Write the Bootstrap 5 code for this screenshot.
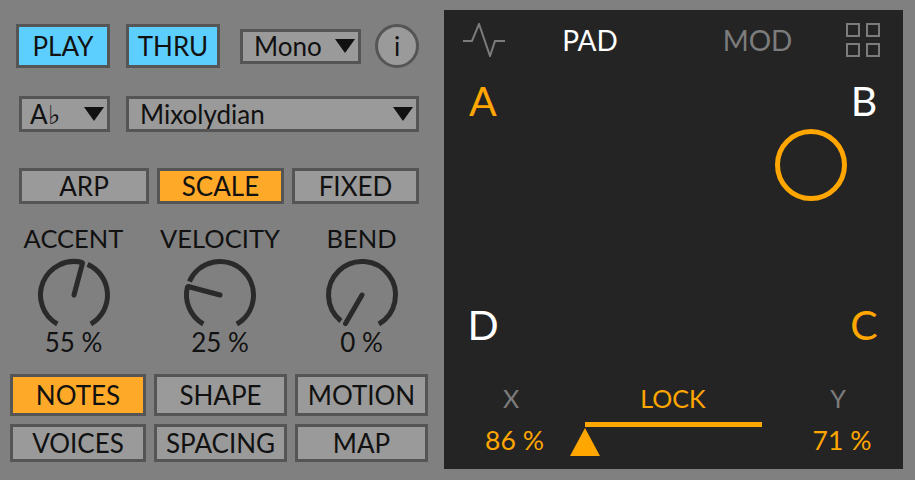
<!DOCTYPE html>
<html lang="en">
<head>
  <meta charset="UTF-8">
  <meta name="viewport" content="width=device-width, initial-scale=1">
  <title>Expressive Chords</title>
  <link href="https://cdn.jsdelivr.net/npm/bootstrap@5.3.3/dist/css/bootstrap.min.css" rel="stylesheet">
  <style>
    body { background: #808080; font-family: Lato, "Liberation Sans", sans-serif; color: #111; overflow: hidden; width: 915px; height: 480px; }
    .left-side { width: 444px; height: 480px; flex: none; }
    .dev-btn { border: 3px solid #555; border-radius: 0; background: #9a9a9a; color: #111; font-size: 26px; line-height: 1; padding: 0; display: flex; align-items: center; justify-content: center; }
    .dev-btn:hover { background: #9a9a9a; color: #111; border-color: #555; }
    .on-blue, .on-blue:hover { background: #5ccfff; }
    .on-orange, .on-orange:hover { background: #ffa928; }
    .dev-select { justify-content: space-between; padding: 0 3px 0 11px; }
    .dev-select.dropdown-toggle::after { border: 0; margin: 0; width: 0; height: 0; border-left: 10px solid transparent; border-right: 10px solid transparent; border-top: 14px solid #111; }
    .round-info { width: 44px; height: 44px; border-radius: 50%; font-size: 26px; margin-left: 14px; margin-top: -1px; }

    .row-top { height: 44px; margin: 24px 0 0 16px; gap: 16px; }
    .row-key { height: 36px; margin: 28px 0 0 19px; gap: 16px; }
    .row-mode { height: 36px; margin: 36px 0 0 19px; gap: 8px; }
    .row-knobs { margin: 19px 0 0 0; }
    .knob-cell { text-align: center; flex: none; }
    .knob-name { font-size: 25.5px; line-height: 30px; }
    .knob-val { font-size: 26px; line-height: 30px; margin-top: -8px; }
    .knob-svg { display: block; margin: 2px auto 0; }
    .row-tabs { margin: 0 0 0 10px; gap: 8px; }
    .row-first { margin-top: 17px; }

    .pad-panel { width: 459px; height: 459px; margin-top: 10px; background: #242424; position: relative; flex: none; }
    .pad-head { height: 47px; margin-top: 6px; padding-left: 19px; font-size: 28px; }
    .corner { font-size: 41px; line-height: 40px; width: 50px; text-align: center; }
    .corner-row { padding: 0 14px; }
    .txt-white { color: #fff; }
    .txt-gray { color: #7c7c7c; }
    .txt-orange { color: #ffa600; }
    .pad-dot { position: absolute; left: 331px; top: 119px; width: 72px; height: 72px; border: 5px solid #ffa600; border-radius: 50%; }
    .pad-foot { font-size: 25px; line-height: 30px; text-align: center; }
    .foot-val { font-size: 26.5px; margin-top: 12px; }
    .lock-bar { height: 5px; width: 177px; background: #ffa600; }
    .lock-arrow { width: 0; height: 0; border-left: 15px solid transparent; border-right: 15px solid transparent; border-bottom: 28px solid #ffa600; margin: 1px 0 0 -15px; }
  </style>
</head>
<body>

<div class="d-flex">
  <div class="left-side">
    <div class="d-flex row-top">
      <button class="btn dev-btn on-blue" style="width:94px">PLAY</button>
      <button class="btn dev-btn on-blue" style="width:94px">THRU</button>
      <div class="d-flex align-items-center ms-1">
        <button class="btn dev-btn dev-select dropdown-toggle" style="width:121px;height:35px">Mono</button>
        <button class="btn dev-btn round-info">i</button>
      </div>
    </div>

    <div class="d-flex row-key">
      <button class="btn dev-btn dev-select dropdown-toggle" style="width:91px;padding-left:8px">A♭</button>
      <button class="btn dev-btn dev-select dropdown-toggle" style="width:293px">Mixolydian</button>
    </div>

    <div class="d-flex row-mode">
      <button class="btn dev-btn" style="width:130px">ARP</button>
      <button class="btn dev-btn on-orange" style="width:127px">SCALE</button>
      <button class="btn dev-btn" style="width:127px">FIXED</button>
    </div>

    <div class="d-flex row-knobs" id="knobs"></div>

    <div class="d-flex row-tabs row-first">
      <button class="btn dev-btn on-orange" style="width:136px;height:42px">NOTES</button>
      <button class="btn dev-btn" style="width:133px;height:42px">SHAPE</button>
      <button class="btn dev-btn" style="width:133px;height:42px">MOTION</button>
    </div>
    <div class="d-flex row-tabs mt-2">
      <button class="btn dev-btn" style="width:136px;height:38px">VOICES</button>
      <button class="btn dev-btn" style="width:133px;height:38px">SPACING</button>
      <button class="btn dev-btn" style="width:133px;height:38px">MAP</button>
    </div>
  </div>

  <div class="pad-panel">
    <div class="d-flex align-items-center pad-head">
      <svg width="42" height="34" viewBox="0 0 42 34" style="flex:none" fill="none" stroke="#7c7c7c" stroke-width="2">
        <path d="M0 18H9L16 1L27 33L32 18H42"/>
      </svg>
      <div class="txt-white text-center" style="width:170px">PAD</div>
      <div class="txt-gray text-center" style="width:165px">MOD</div>
      <svg style="flex:none;margin-left:6px" width="34" height="34" viewBox="0 0 34 34" fill="none" stroke="#7c7c7c" stroke-width="2">
        <rect x="1" y="1" width="12" height="12"/><rect x="21" y="1" width="12" height="12"/>
        <rect x="1" y="21" width="12" height="12"/><rect x="21" y="21" width="12" height="12"/>
      </svg>
    </div>

    <div class="d-flex justify-content-between corner-row" style="margin-top:18px">
      <div class="corner txt-orange">A</div>
      <div class="corner txt-white">B</div>
    </div>
    <div class="pad-dot"></div>
    <div class="d-flex justify-content-between corner-row" style="margin-top:184px">
      <div class="corner txt-white">D</div>
      <div class="corner txt-orange">C</div>
    </div>

    <div class="d-flex pad-foot" style="margin-top:38px">
      <div style="width:141px;flex:none">
        <div class="txt-gray" style="padding-right:7px">X</div>
        <div class="txt-orange foot-val">86 %</div>
      </div>
      <div style="width:177px;flex:none">
        <div class="txt-orange" style="margin-bottom:9px;margin-left:-1px">LOCK</div>
        <div class="lock-bar"></div>
        <div class="lock-arrow"></div>
      </div>
      <div class="flex-grow-1">
        <div class="txt-gray" style="padding-left:11px">Y</div>
        <div class="txt-orange foot-val" style="padding-left:19px">71 %</div>
      </div>
    </div>
  </div>
</div>

<script src="https://cdn.jsdelivr.net/npm/bootstrap@5.3.3/dist/js/bootstrap.bundle.min.js"></script>
<script>
  const knobs = [
    { nom: "ACCENT", val: 55, width: 147 },
    { nom: "VELOCITY", val: 25, width: 146 },
    { nom: "BEND", val: 0, width: 137 }
  ];

  // angle in degrees from the top, clockwise
  function point(r, deg) {
    const a = deg * Math.PI / 180;
    return (40 + r * Math.sin(a)).toFixed(1) + " " + (40 - r * Math.cos(a)).toFixed(1);
  }

  function arc(from, to) {
    if (to - from < 1) return "";
    const big = to - from > 180 ? 1 : 0;
    return `<path d="M${point(33.5, from)}A33.5 33.5 0 ${big} 1 ${point(33.5, to)}"/>`;
  }

  document.getElementById("knobs").innerHTML = knobs.map(k => {
    const angle = -150 + k.val * 3;
    return `
      <div class="knob-cell" style="width:${k.width}px">
        <div class="knob-name">${k.nom}</div>
        <svg class="knob-svg" width="80" height="80" viewBox="0 0 80 80" fill="none" stroke="#2a2a2a" stroke-width="5">
          ${arc(-150, angle)}${arc(angle + 9, 150)}
          <path d="M${point(0, angle)}L${point(33, angle)}" stroke-linecap="round"/>
        </svg>
        <div class="knob-val">${k.val} %</div>
      </div>`;
  }).join("");
</script>

</body>
</html>
